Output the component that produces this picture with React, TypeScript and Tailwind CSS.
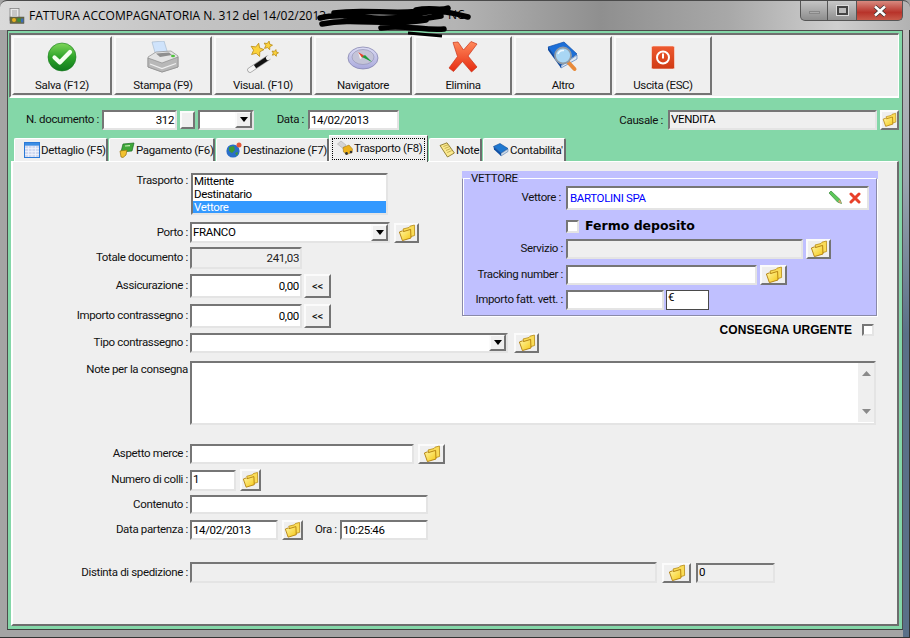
import type { ReactNode } from 'react';

const inset = 'border-2 border-t-[#767676] border-l-[#767676] border-r-[#e4e4e4] border-b-[#e4e4e4]';
const raised = 'border-2 border-t-[#fbfbfb] border-l-[#fbfbfb] border-r-[#747474] border-b-[#747474] bg-[#efefef]';

function FolderIcon({ size = 18 }: { size?: number }) {
  return (
    <svg width={size} height={size} viewBox="0 0 18 18">
      <defs>
        <linearGradient id="fld" x1="0" y1="0" x2="1" y2="1">
          <stop offset="0" stopColor="#fff7a8" />
          <stop offset="1" stopColor="#f6c814" />
        </linearGradient>
      </defs>
      <path d="M5 5 L11 3.5 L12 2.2 L16.4 1 L16.6 11.5 L8 14 Z" fill="#fadc58" stroke="#b88a10" strokeWidth="0.8" />
      <path d="M1.4 8 L4.6 6.8 L5.4 7.6 L12.6 5.4 L13 14 L4.4 16.6 Z" fill="url(#fld)" stroke="#b07c08" strokeWidth="0.9" />
    </svg>
  );
}

function FolderBtn({ w, h, className = '' }: { w: string; h: string; className?: string }) {
  return (
    <div className={`${raised} ${w} ${h} ${className} flex items-center justify-center shrink-0`}>
      <FolderIcon />
    </div>
  );
}

function Arrow() {
  return (
    <div className={`${raised} w-[17px] h-[17px] flex items-center justify-center shrink-0`}>
      <svg width="8" height="5" viewBox="0 0 8 5"><path d="M0 0H8L4 5Z" fill="#000" /></svg>
    </div>
  );
}

function Field({ className = '', children, disabled = false }: { className?: string; children?: ReactNode; disabled?: boolean }) {
  return (
    <div className={`${inset} ${disabled ? 'bg-[#efefef]' : 'bg-white'} ${className} shrink-0 flex items-center pb-[1px] overflow-hidden`}>
      {children}
    </div>
  );
}

function Label({ children, width = 'w-[175px]', className = '' }: { children: ReactNode; width?: string; className?: string }) {
  return <div className={`${width} ${className} text-right shrink-0 whitespace-nowrap pb-[2px]`}>{children}</div>;
}

function SaveIcon() {
  return (
    <svg width="32" height="32" viewBox="0 0 32 32">
      <defs>
        <linearGradient id="sv" x1="0" y1="0" x2="0" y2="1">
          <stop offset="0" stopColor="#7fd65a" />
          <stop offset="0.5" stopColor="#2fa52a" />
          <stop offset="1" stopColor="#0f7a1c" />
        </linearGradient>
      </defs>
      <circle cx="16" cy="16" r="14" fill="url(#sv)" stroke="#1a7a20" strokeWidth="0.6" />
      <path d="M8.5 16.5 L13.8 21.5 L24 11" fill="none" stroke="#f4fff0" strokeWidth="4.2" strokeLinecap="round" strokeLinejoin="round" />
    </svg>
  );
}

function PrintIcon() {
  return (
    <svg width="32" height="32" viewBox="0 0 32 32">
      <path d="M5 1 L17 0 L21 13 L9 15 Z" fill="#cfe3fb" stroke="#9fb4c8" strokeWidth="0.6" />
      <path d="M1 16 L9 11 L24 10 L31 15 L31 26 L15 31 L1 26 Z" fill="#e4e4e4" stroke="#8c8c8c" strokeWidth="0.7" />
      <path d="M1 17 L15 22 L31 16 L31 26 L15 31 L1 26 Z" fill="#b8b8b8" stroke="#8c8c8c" strokeWidth="0.7" />
      <path d="M3 23 L15 27.5 L29 22.5" fill="none" stroke="#efefef" strokeWidth="1.3" />
      <path d="M9 12.5 L22 11.5 L25 14 L13 16 Z" fill="#8f8f8f" />
      <ellipse cx="26" cy="15" rx="2" ry="1.2" fill="#4fc23c" />
    </svg>
  );
}

function Star({ x, y, r }: { x: number; y: number; r: number }) {
  const pts: string[] = [];
  for (let i = 0; i < 10; i++) {
    const a = -Math.PI / 2 + 0.25 + (i * Math.PI) / 5;
    const d = i % 2 === 0 ? r : r * 0.48;
    pts.push(`${(x + d * Math.cos(a)).toFixed(1)},${(y + d * Math.sin(a)).toFixed(1)}`);
  }
  return <polygon points={pts.join(' ')} fill="#fbd23c" stroke="#b98a12" strokeWidth="0.8" strokeLinejoin="round" />;
}

function WandIcon() {
  return (
    <svg width="32" height="32" viewBox="0 0 32 32">
      <path d="M3 29 L21 17" stroke="#9a9a9a" strokeWidth="5.4" strokeLinecap="round" />
      <path d="M3 29 L8 25.7" stroke="#f4f4f4" strokeWidth="4" strokeLinecap="round" />
      <path d="M8 25.7 L21 17" stroke="#111" strokeWidth="4" />
      <path d="M21 17 L26 13.5" stroke="#eeeeee" strokeWidth="4.2" strokeLinecap="round" />
      <Star x={10} y={9} r={7} />
      <Star x={21} y={4.5} r={4.5} />
      <Star x={28} y={12} r={3.5} />
    </svg>
  );
}

function CompassIcon() {
  return (
    <svg width="32" height="32" viewBox="0 0 32 32">
      <defs>
        <linearGradient id="cp" x1="0" y1="0" x2="0" y2="1">
          <stop offset="0" stopColor="#dcdcf4" />
          <stop offset="1" stopColor="#a9a9dc" />
        </linearGradient>
      </defs>
      <ellipse cx="16" cy="17" rx="15" ry="11" fill="url(#cp)" stroke="#7b7ba8" strokeWidth="0.7" />
      <ellipse cx="16" cy="16" rx="11" ry="7.5" fill="#c4c4d8" stroke="#8e8eb0" strokeWidth="0.6" />
      <path d="M11 11 L17 14.5 L15 17 Z" fill="#e8442c" />
      <path d="M15 16 L18 14 L25 21 Z" fill="#1f9a3c" />
      <path d="M11 11 L15 17 L13 18 Z" fill="#f2f2f2" />
    </svg>
  );
}

function DeleteIcon() {
  return (
    <svg width="32" height="32" viewBox="0 0 32 32">
      <defs>
        <linearGradient id="dl" x1="0" y1="0" x2="0" y2="1">
          <stop offset="0" stopColor="#ff8a5c" />
          <stop offset="1" stopColor="#e62a10" />
        </linearGradient>
      </defs>
      <path d="M6 1.5 L11 1 L16.5 9 L24 0.5 L30 3 L21 15 L30 26 L24.5 31 L15.5 20.5 L6.5 30.5 L2 27 L10.5 15.5 Z" fill="url(#dl)" stroke="#c8341a" strokeWidth="0.7" strokeLinejoin="round" />
    </svg>
  );
}

function BookIcon() {
  return (
    <svg width="32" height="32" viewBox="0 0 32 32">
      <path d="M1 6 L17 1 L30 13 L14 24 Z" fill="#1c6fd8" stroke="#0e4ea8" strokeWidth="0.7" />
      <path d="M1 6 L14 24 L14 27 L1 9 Z" fill="#0b47a0" />
      <path d="M14 25 L30 14 L30 18 L14 27 Z" fill="#dfe8f2" stroke="#0e4ea8" strokeWidth="0.5" />
      <path d="M21 21 L27.5 28" stroke="#e88a3a" strokeWidth="4" strokeLinecap="round" />
      <circle cx="16" cy="14.5" r="8" fill="#a9d6f4" stroke="#8f9ba6" strokeWidth="1.8" />
      <path d="M11 13 A5.5 5.5 0 0 1 17 9.5" stroke="#eef8ff" strokeWidth="1.5" fill="none" />
    </svg>
  );
}

function PowerIcon() {
  return (
    <svg width="32" height="32" viewBox="0 0 32 32">
      <defs>
        <linearGradient id="pw" x1="0" y1="0" x2="0" y2="1">
          <stop offset="0" stopColor="#ee5a30" />
          <stop offset="1" stopColor="#d03a14" />
        </linearGradient>
      </defs>
      <rect x="4.5" y="5" width="23" height="23" rx="1.5" fill="url(#pw)" stroke="#fbe9e2" strokeWidth="0.6" />
      <circle cx="16" cy="16.5" r="6" fill="none" stroke="#fff" strokeWidth="2" />
      <path d="M16 12.5 V17.5" stroke="#fff" strokeWidth="2" />
    </svg>
  );
}

function WinIcon() {
  return (
    <svg width="16" height="16" viewBox="0 0 16 16">
      <rect x="1" y="0.5" width="9" height="12" fill="#e8e8e8" stroke="#777" strokeWidth="0.7" />
      <path d="M3 3H8M3 5H8M3 7H8" stroke="#8a8a8a" strokeWidth="0.7" />
      <rect x="1" y="9" width="14" height="6.5" fill="#6b6b3a" stroke="#555" strokeWidth="0.5" />
      <circle cx="5" cy="12" r="2" fill="#e8b020" />
      <circle cx="10" cy="12" r="2" fill="#3e8c3a" />
      <rect x="12" y="10.5" width="2.4" height="4" fill="#3a6ab8" />
    </svg>
  );
}

function CalendarTab() {
  return (
    <svg width="16" height="16" viewBox="0 0 16 16" className="shrink-0">
      <rect x="0.5" y="0.5" width="15" height="15" fill="#cfd8f0" stroke="#2a7ad8" />
      <rect x="1" y="1" width="14" height="2.6" fill="#3b8de4" />
      <path d="M1 6.5H15M1 9.5H15M1 12.5H15M4.5 4V15M8 4V15M11.5 4V15" stroke="#f1f4fb" strokeWidth="0.8" />
    </svg>
  );
}

function MoneyTab() {
  return (
    <svg width="16" height="16" viewBox="0 0 16 16" className="shrink-0">
      <path d="M4 2 L15 1 L13 9 L2 10 Z" fill="#3ea83a" stroke="#1b6a22" strokeWidth="0.7" />
      <path d="M6 4 L11 3.6" stroke="#c8eeb8" strokeWidth="1.1" />
      <path d="M1 9 L8 8 L7 13 L4 15.5 L2 15 Z" fill="#f2c230" stroke="#96700c" strokeWidth="0.7" />
    </svg>
  );
}

function GlobeTab() {
  return (
    <svg width="16" height="16" viewBox="0 0 16 16" className="shrink-0">
      <circle cx="7" cy="9" r="6.6" fill="#2a6ec8" />
      <path d="M3 5 L8 4 L9 8 L6 11 L3 9 Z M9 11 L12 10 L11 14 Z" fill="#3d9a35" />
      <circle cx="13" cy="3" r="2.5" fill="#e2583a" />
    </svg>
  );
}

function TruckTab() {
  return (
    <svg width="16" height="16" viewBox="0 0 16 16" className="shrink-0">
      <path d="M0.5 4 L4 1 L9 5 L6 8.5 Z" fill="#d4d4d4" stroke="#a5a5a5" strokeWidth="0.5" />
      <path d="M6 7.5 L12 5 L15.5 9 L15 12.5 L9.5 14.5 L6.5 12 Z" fill="#eeb21c" stroke="#8f6a0c" strokeWidth="0.5" />
      <circle cx="9.5" cy="13.5" r="1.4" fill="#333" />
      <circle cx="14" cy="12" r="1.3" fill="#333" />
    </svg>
  );
}

function NoteTab() {
  return (
    <svg width="16" height="16" viewBox="0 0 16 16" className="shrink-0">
      <path d="M1 3.5 L8 0.8 L15.4 11 L8.5 15 Z" fill="#fbe98e" stroke="#7c6a1c" strokeWidth="0.8" />
      <path d="M4.4 4.5 L9 2.8 M5.6 6.5 L10.4 4.6 M7 8.5 L11.6 6.6 M8.2 10.5 L12.8 8.6" stroke="#9f8a30" strokeWidth="0.6" />
    </svg>
  );
}

function BookTab() {
  return (
    <svg width="16" height="16" viewBox="0 0 16 16" className="shrink-0">
      <path d="M0.5 4.5 L7 1.5 L15 6.5 L8 11 Z" fill="#1f78d0" stroke="#0e4a96" strokeWidth="0.6" />
      <path d="M0.5 4.5 L8 11 L8 14 L1 7.5 Z" fill="#0f4fa4" />
      <path d="M8 11.5 L15 7 L15 9.5 L8 14 Z" fill="#cfdce8" stroke="#0e4a96" strokeWidth="0.4" />
    </svg>
  );
}

const tools = [
  { label: 'Salva (F12)', icon: <SaveIcon />, w: 'w-[100px]' },
  { label: 'Stampa (F9)', icon: <PrintIcon />, w: 'w-[98px]' },
  { label: 'Visual. (F10)', icon: <WandIcon />, w: 'w-[98px]' },
  { label: 'Navigatore', icon: <CompassIcon />, w: 'w-[98px]' },
  { label: 'Elimina', icon: <DeleteIcon />, w: 'w-[98px]' },
  { label: 'Altro', icon: <BookIcon />, w: 'w-[98px]' },
  { label: 'Uscita (ESC)', icon: <PowerIcon />, w: 'w-[98px]' },
];

const tabs = [
  { label: 'Dettaglio (F5)', icon: <CalendarTab />, w: 'w-[94px]' },
  { label: 'Pagamento (F6)', icon: <MoneyTab />, w: 'w-[106px]' },
  { label: 'Destinazione (F7)', icon: <GlobeTab />, w: 'w-[113px]' },
  { label: 'Trasporto (F8)', icon: <TruckTab />, w: 'w-[99px]', active: true },
  { label: 'Note', icon: <NoteTab />, w: 'w-[53px]' },
  { label: "Contabilita'", icon: <BookTab />, w: 'w-[83px]' },
];

export default function App() {
  return (
    <div className="w-[910px] h-[638px] overflow-hidden flex flex-col bg-[#a4a4a4] border-b border-[#333] text-[11.5px] leading-[14px] tracking-[-0.35px] text-[#111] font-['Roboto',Arial,sans-serif]">
      {/* Title bar */}
      <div className="relative h-[30px] shrink-0 flex rounded-t-[7px] border-t border-[#4a4a4a] tracking-normal bg-[linear-gradient(90deg,#dadada_0%,#c4c4c4_20%,#b4b4b4_50%,#8f8f8f_66%,#a8a8a8_80%,#cfcfcf_92%,#b2b2b2_100%)]">
        <div className="ml-[9px] mt-[7px]"><WinIcon /></div>
        <div className="ml-[4px] mt-[8px] text-[12px] text-black font-['Open_Sans',sans-serif] whitespace-nowrap">
          FATTURA ACCOMPAGNATORIA N. 312 del 14/02/2013 -
        </div>
        <span className="absolute left-[448px] top-[7px] text-[12px] text-black font-['Open_Sans',sans-serif]">NC</span>
        <svg className="absolute left-[316px] top-[2px]" width="160" height="36" viewBox="0 0 160 36">
          <path d="M4 15 C30 8 60 20 90 13 S130 8 152 14 M6 21 C40 14 70 24 110 17 M18 10 C50 5 80 13 115 7 M30 17 C60 12 90 20 125 13 M65 25 C85 21 110 28 128 26 M100 7 C115 4 125 8 132 5" fill="none" stroke="#000" strokeWidth="5.5" strokeLinecap="round" />
          <path d="M92 30 L126 33" stroke="#000" strokeWidth="3" />
        </svg>
        <div className="ml-auto mr-[7px] h-[20px] flex relative">
          <div className="w-[28px] h-[20px] rounded-bl-[5px] border border-t-0 border-[#555] bg-[linear-gradient(180deg,#c4c4c4,#8d8d8d)] flex items-center justify-center">
            <div className="w-[11px] h-[3px] mt-[3px] bg-[#aaa] border border-[#888]" />
          </div>
          <div className="w-[28px] h-[20px] border-b border-[#555] bg-[linear-gradient(180deg,#c8c8c8,#909090)] flex items-center justify-center">
            <div className="w-[11px] h-[9px] border-2 border-[#444] bg-[#bbb] outline outline-1 outline-[#ddd]" />
          </div>
          <div className="w-[47px] h-[20px] rounded-br-[5px] border border-t-0 border-[#555] bg-[linear-gradient(180deg,#d88a80,#b8332a_60%,#c85a4a)] flex items-center justify-center">
            <svg width="16" height="12" viewBox="0 0 16 12"><path d="M3 1.5 L13 10.5 M13 1.5 L3 10.5" stroke="#333" strokeWidth="4" /><path d="M3 1.5 L13 10.5 M13 1.5 L3 10.5" stroke="#fff" strokeWidth="2.6" /></svg>
          </div>
        </div>
      </div>

      {/* Window client area */}
      <div className="flex-1 min-h-0 flex pl-[7px]">
        <div className="flex-1 flex flex-col border border-b-[#3f3f3f] border-[#4d4d4d] bg-[#84d7a8] h-[600px]">
          {/* Toolbar */}
          <div className="mt-[2px] ml-[1px] mr-[3px] h-[65px] shrink-0 border-t-2 border-l-2 border-t-[#6f6f6f] border-l-[#6f6f6f] border-r border-b-2 border-r-[#fff] border-b-[#fff] bg-[#efefef] flex gap-[2px] pl-[1px] pt-[1px]">
            {tools.map((t) => (
              <div key={t.label} className={`${raised} ${t.w} h-[59px] flex flex-col items-center pt-[3px]`}>
                {t.icon}
                <div className="mt-[5px] whitespace-nowrap">{t.label}</div>
              </div>
            ))}
          </div>

          {/* Document row */}
          <div className="h-[20px] mt-[12px] flex items-center shrink-0">
            <Label width="w-[91px]">N. documento :</Label>
            <Field className="ml-[3px] w-[75px] h-[20px] justify-end pr-[1px] text-black">312</Field>
            <div className={`${raised} ml-[3px] w-[15px] h-[18px]`} />
            <Field className="ml-[3px] w-[56px] h-[20px] justify-end"><Arrow /></Field>
            <Label width="w-[50px]">Data :</Label>
            <Field className="ml-[4px] w-[91px] h-[20px] pl-[1px] text-black">14/02/2013</Field>
            <div className="ml-auto flex items-center mr-[3px]">
              <span>Causale :</span>
              <Field disabled className="ml-[5px] w-[209px] h-[20px] items-start pl-[1px] text-black">VENDITA</Field>
              <FolderBtn w="w-[19px]" h="h-[20px]" className="ml-[3px]" />
            </div>
          </div>

          {/* Tabs */}
          <div className="h-[25px] mt-[6px] ml-[6px] flex items-end shrink-0">
            {tabs.map((t) =>
              t.active ? (
                <div key={t.label} className={`${t.w} h-[27px] -mb-[1px] pb-[3px] relative z-10 bg-[#efefef] border-t border-x border-t-[#fff] border-l-[#fff] border-r-[#555] flex items-center pl-[7px] gap-[1px] whitespace-nowrap`}>
                  <div className="absolute inset-[2px] border border-dotted border-black" />
                  {t.icon}
                  <span>{t.label}</span>
                </div>
              ) : (
                <div key={t.label} className={`${t.w} h-[23px] rounded-t-[2px] ml-px first:ml-0 bg-[#efefef] border-t border-l border-r-2 border-t-[#fff] border-l-[#fff] border-r-[#6d6d6d] flex items-center pl-[9px] gap-[1px] whitespace-nowrap`}>
                  {t.icon}
                  <span>{t.label}</span>
                </div>
              ),
            )}
          </div>

          {/* Tab panel */}
          <div className="flex-1 min-h-0 ml-[3px] mr-[3px] mb-[3px] border-t border-l-2 border-r-2 border-b-2 border-t-[#fff] border-l-[#fff] border-r-[#6d6d6d] border-b-[#6d6d6d] bg-[#efefef]">
            <div className="flex">
              {/* Left column */}
              <div className="w-[449px] shrink-0">
                <div className="flex mt-[11px]">
                  <Label>Trasporto :</Label>
                  <div className={`${inset} bg-white ml-[3px] w-[197px] h-[42px] leading-[13px] text-black overflow-hidden`}>
                    <div className="pl-[1px]">Mittente</div>
                    <div className="pl-[1px]">Destinatario</div>
                    <div className="pl-[1px] bg-[#3399ff] text-white">Vettore</div>
                  </div>
                </div>
                <div className="flex items-center mt-[7px]">
                  <Label>Porto :</Label>
                  <Field className="ml-[2px] w-[200px] h-[21px] pl-[1px] justify-between text-black">FRANCO<Arrow /></Field>
                  <FolderBtn w="w-[25px]" h="h-[20px]" className="ml-[4px]" />
                </div>
                <div className="flex items-center mt-[4px]">
                  <Label>Totale documento :</Label>
                  <Field disabled className="ml-[2px] w-[112px] h-[22px] justify-end pr-[1px] text-[#222]">241,03</Field>
                </div>
                <div className="flex items-center mt-[5px]">
                  <Label>Assicurazione :</Label>
                  <Field className="ml-[2px] w-[112px] h-[24px] justify-end pr-[1px] text-black">0,00</Field>
                  <div className={`${raised} ml-[2px] w-[27px] h-[24px] flex items-center justify-center`}>&lt;&lt;</div>
                </div>
                <div className="flex items-center mt-[6px]">
                  <Label>Importo contrassegno :</Label>
                  <Field className="ml-[2px] w-[112px] h-[24px] justify-end pr-[1px] text-black">0,00</Field>
                  <div className={`${raised} ml-[2px] w-[27px] h-[24px] flex items-center justify-center`}>&lt;&lt;</div>
                </div>
              </div>

              {/* Vettore group */}
              <div className="w-[416px] shrink-0">
                <div className="mt-[9px] h-[145px] bg-[#c0c0ff] relative">
                  <div className="absolute left-0 right-[1px] top-[7px] bottom-0 border border-[#8a8aa8] border-t-white shadow-[1px_1px_0_#fff,inset_1px_0_0_#fff]" />
                  <div className="absolute left-[8px] top-0 px-[1px] bg-[#c0c0ff] leading-[14px]">VETTORE</div>
                  <div className="relative flex flex-col">
                    <div className="flex items-center mt-[15px]">
                      <Label width="w-[99px]">Vettore :</Label>
                      <Field className="ml-[5px] w-[303px] h-[24px] pl-[2px] text-[#0000ff] justify-between">
                        BARTOLINI SPA
                        <span className="flex items-center gap-[6px] pr-[6px]">
                          <svg width="15" height="15" viewBox="0 0 15 15"><path d="M1 3 L3 1 L12 9.5 L13.5 13.5 L9.5 12 Z" fill="#5cc85a" stroke="#3a8a3a" strokeWidth="0.7" /><path d="M10 11.8 L13.5 13.5 L11.8 9.4 Z" fill="#e0a070" /></svg>
                          <svg width="12" height="12" viewBox="0 0 12 12"><path d="M2 2 L10 10 M10 2 L2 10" stroke="#e8402a" strokeWidth="3" strokeLinecap="round" /></svg>
                        </span>
                      </Field>
                    </div>
                    <div className="flex items-center mt-[9px] ml-[104px]">
                      <div className={`${inset} w-[13px] h-[13px] bg-white shrink-0`} />
                      <span className="ml-[6px] text-[12.5px] font-bold tracking-normal font-['DejaVu_Sans',sans-serif] text-black whitespace-nowrap">Fermo deposito</span>
                    </div>
                    <div className="flex items-center mt-[6px]">
                      <Label width="w-[101px]">Servizio :</Label>
                      <Field disabled className="ml-[3px] w-[237px] h-[20px]" />
                      <FolderBtn w="w-[25px]" h="h-[20px]" className="ml-[3px]" />
                    </div>
                    <div className="flex items-center mt-[6px]">
                      <Label width="w-[101px]">Tracking number :</Label>
                      <Field className="ml-[3px] w-[191px] h-[20px]" />
                      <FolderBtn w="w-[27px]" h="h-[20px]" className="ml-[3px]" />
                    </div>
                    <div className="flex items-center mt-[5px]">
                      <Label width="w-[101px]">Importo fatt. vett. :</Label>
                      <Field className="ml-[3px] w-[98px] h-[20px]" />
                      <div className="ml-[2px] w-[43px] h-[20px] bg-white border border-[#4a4a4a] leading-[13px] pl-[1px] text-black">€</div>
                    </div>
                  </div>
                </div>
                <div className="flex items-center mt-[8px] h-[12px] justify-end pr-[4px]">
                  <span className="text-[12px] font-bold tracking-[0.1px] font-['Liberation_Sans',Arial,sans-serif] text-black whitespace-nowrap">CONSEGNA URGENTE</span>
                  <div className={`${inset} ml-[10px] w-[12px] h-[12px] bg-white shrink-0`} />
                </div>
              </div>
            </div>

            <div className="flex items-center -mt-[3px]">
              <Label>Tipo contrassegno :</Label>
              <Field className="ml-[2px] w-[318px] h-[20px] justify-end"><Arrow /></Field>
              <FolderBtn w="w-[25px]" h="h-[20px]" className="ml-[6px]" />
            </div>
            <div className="flex items-start mt-[8px]">
              <Label className="pt-[1px]">Note per la consegna</Label>
              <Field className="ml-[2px] w-[686px] h-[64px] justify-end items-stretch">
                <div className="w-[16px] bg-[#efefef] flex flex-col items-center justify-between py-[8px]">
                  <svg width="9" height="5" viewBox="0 0 9 5"><path d="M0 5H9L4.5 0Z" fill="#8a8a8a" /></svg>
                  <svg width="9" height="5" viewBox="0 0 9 5"><path d="M0 0H9L4.5 5Z" fill="#8a8a8a" /></svg>
                </div>
              </Field>
            </div>
            <div className="flex items-center mt-[19px]">
              <Label>Aspetto merce :</Label>
              <Field className="ml-[2px] w-[224px] h-[20px]" />
              <FolderBtn w="w-[27px]" h="h-[20px]" className="ml-[4px]" />
            </div>
            <div className="flex items-center mt-[5px]">
              <Label>Numero di colli :</Label>
              <Field className="ml-[2px] w-[46px] h-[21px] pl-[1px] items-start text-black">1</Field>
              <FolderBtn w="w-[21px]" h="h-[22px]" className="ml-[4px]" />
            </div>
            <div className="flex items-center mt-[4px]">
              <Label>Contenuto :</Label>
              <Field className="ml-[2px] w-[238px] h-[19px]" />
            </div>
            <div className="flex items-center mt-[6px]">
              <Label>Data partenza :</Label>
              <Field className="ml-[2px] w-[88px] h-[20px] pl-[1px] text-black">14/02/2013</Field>
              <FolderBtn w="w-[21px]" h="h-[20px]" className="ml-[4px]" />
              <span className="ml-[12px] w-[25px] shrink-0 whitespace-nowrap pb-[2px]">Ora :</span>
              <Field className="w-[88px] h-[20px] pl-[1px] text-black">10:25:46</Field>
            </div>
            <div className="flex items-center mt-[22px]">
              <Label>Distinta di spedizione :</Label>
              <Field disabled className="ml-[2px] w-[467px] h-[21px]" />
              <FolderBtn w="w-[29px]" h="h-[20px]" className="ml-[5px]" />
              <Field disabled className="ml-[5px] w-[79px] h-[20px] pl-[1px] items-start text-black">0</Field>
            </div>
          </div>
        </div>
        <div className="w-[7px] shrink-0 border-r border-[#333] bg-[linear-gradient(180deg,#bdbdbd_0%,#9aa4ae_25%,#5a7088_50%,#5a7088_100%)]" />
      </div>
    </div>
  );
}
